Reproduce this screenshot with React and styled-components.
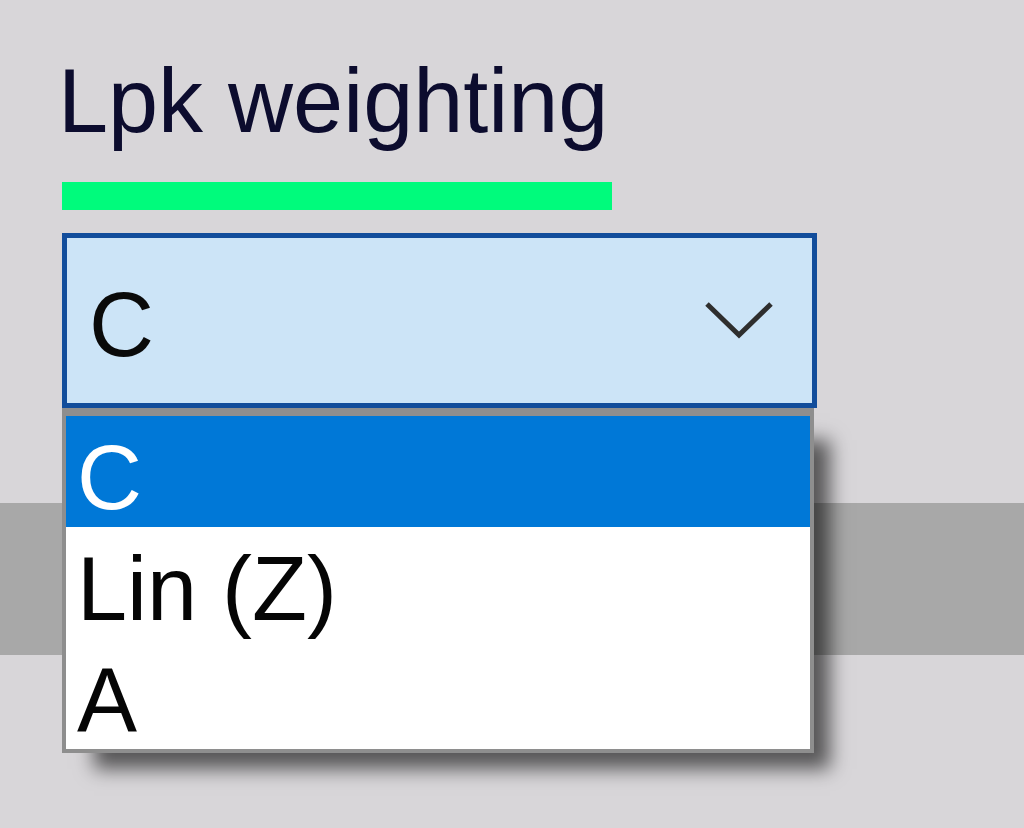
import styled, { createGlobalStyle } from "styled-components";

const GlobalStyle = createGlobalStyle`
    html, body {
        margin: 0;
        padding: 0;
        background: #d8d6d9;
    }
    body {
        font-family: "Liberation Sans", Arial, sans-serif;
    }
`

const options = ["C", "Lin (Z)", "A"];

const App = () => {
    const selected = "C";
    return (
        <Page>
            <GlobalStyle />
            <Panel>
                <Field>
                    <Label>Lpk weighting</Label>
                    <StatusBar />
                    <Select>
                        <SelectValue>{selected}</SelectValue>
                        <Chevron viewBox="0 0 70 40">
                            <polyline points="3,4 35,35 67,4" />
                        </Chevron>
                    </Select>
                    <Dropdown>
                        {options.map((opt) => (
                            <Option key={opt} active={opt === selected}>{opt}</Option>
                        ))}
                    </Dropdown>
                </Field>
            </Panel>
            <Band />
            <Rest />
        </Page>
    )
}

export default App;

const Page = styled.div`
    width: 1024px;
    height: 828px;
    display: flex;
    flex-direction: column;
    overflow: hidden;
    background: #d8d6d9;
`

const Panel = styled.div`
    height: 503px;
    box-sizing: border-box;
    padding: 56px 0 0 62px;
`

const Field = styled.div`
    position: relative;
    width: 755px;
    display: flex;
    flex-direction: column;
    z-index: 2;
`

const Label = styled.div`
    font-size: 90px;
    line-height: 90px;
    height: 90px;
    margin-left: -4px;
    color: #0c0c2e;
    white-space: nowrap;
`

const StatusBar = styled.div`
    width: 550px;
    height: 28px;
    margin-top: 36px;
    background: #00fb7c;
`

const Select = styled.div`
    height: 175px;
    margin-top: 23px;
    box-sizing: border-box;
    border: 5px solid #124d9b;
    background: #cce4f7;
    display: flex;
    align-items: center;
    justify-content: space-between;
    padding: 8px 38px 0 22px;
`

const SelectValue = styled.span`
    font-size: 90px;
    line-height: 1;
    color: #0a0a0a;
`

const Chevron = styled.svg`
    width: 70px;
    height: 40px;
    margin-top: -10px;
    fill: none;
    stroke: #2e2e2e;
    stroke-width: 5;
`

const Dropdown = styled.div`
    position: absolute;
    top: 100%;
    left: 0;
    width: 752px;
    box-sizing: border-box;
    border: 4px solid #8e8e8e;
    border-top-width: 8px;
    background: #ffffff;
    box-shadow: 24px 24px 18px -8px rgba(0, 0, 0, 0.6);
`

const Option = styled.div`
    height: 111px;
    box-sizing: border-box;
    padding: 14px 0 0 11px;
    font-size: 90px;
    line-height: 97px;
    white-space: nowrap;
    color: ${(p) => (p.active ? "#ffffff" : "#050505")};
    background: ${(p) => (p.active ? "#0078d7" : "transparent")};
`

const Band = styled.div`
    height: 152px;
    flex-shrink: 0;
    background: #a8a8a8;
`

const Rest = styled.div`
    flex: 1;
    background: #d8d6d9;
`
